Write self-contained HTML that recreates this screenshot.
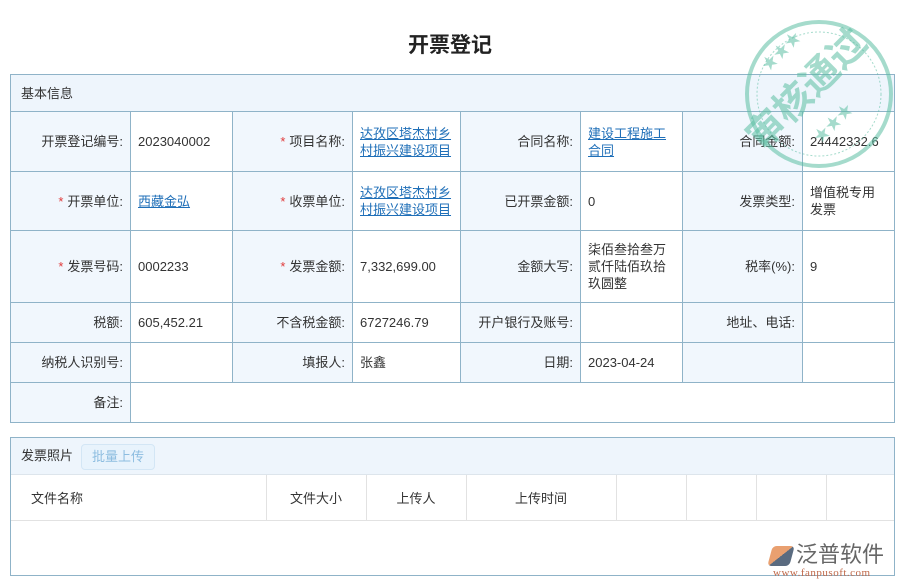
<!DOCTYPE html>
<html><head><meta charset="utf-8"><style>
*{margin:0;padding:0;box-sizing:border-box}
body{width:900px;height:588px;background:#fff;font-family:"Liberation Sans","Noto Sans CJK SC",sans-serif;font-size:13px;color:#333;position:relative;overflow:hidden}
h1{position:absolute;top:29px;left:0;width:900px;text-align:center;font-size:21px;font-weight:bold;color:#222}
table{border-collapse:collapse;table-layout:fixed;position:absolute;left:10px}
#t1{top:74px;width:884px}
#t1 td{border:1px solid #8fb3c8;padding:0 7px;line-height:17px;vertical-align:middle}
td.l{background:#f1f7fd;text-align:right}
td.h{background:#eef5fc;padding-left:10px!important}
.r{color:#e03a3a;margin-right:4px}
a{color:#1f6fb8;text-decoration:underline}
#b2{position:absolute;left:10px;top:437px;width:885px;height:139px;border:1px solid #8fb3c8}
#b2 .hd{height:37px;background:#eef5fc;border-bottom:1px solid #dde5ec;padding-left:10px;line-height:36px}
.btn{display:inline-block;margin-left:8px;padding:0 10px;height:26px;line-height:24px;border:1px solid #d3e6f5;border-radius:4px;background:#e8f3fc;color:#8dbde0;vertical-align:middle}
#t2{position:static;width:883px}
#t2 td{border-right:1px solid #e2e2e2;border-bottom:1px solid #e2e2e2;height:45px}
</style></head><body>
<h1>开票登记</h1>
<table id="t1">
<colgroup><col style="width:120px"><col style="width:102px"><col style="width:120px"><col style="width:108px"><col style="width:120px"><col style="width:102px"><col style="width:120px"><col style="width:92px"></colgroup>
<tr style="height:37px"><td class="h" colspan="8" style="text-align:left">基本信息</td></tr>
<tr style="height:60px"><td class="l">开票登记编号:</td><td>2023040002</td><td class="l"><span class="r">*</span>项目名称:</td><td><a>达孜区塔杰村乡村振兴建设项目</a></td><td class="l">合同名称:</td><td><a>建设工程施工合同</a></td><td class="l">合同金额:</td><td>24442332.6</td></tr>
<tr style="height:59px"><td class="l"><span class="r">*</span>开票单位:</td><td><a>西藏金弘</a></td><td class="l"><span class="r">*</span>收票单位:</td><td><a>达孜区塔杰村乡村振兴建设项目</a></td><td class="l">已开票金额:</td><td>0</td><td class="l">发票类型:</td><td>增值税专用发票</td></tr>
<tr style="height:72px"><td class="l"><span class="r">*</span>发票号码:</td><td>0002233</td><td class="l"><span class="r">*</span>发票金额:</td><td>7,332,699.00</td><td class="l">金额大写:</td><td>柒佰叁拾叁万贰仟陆佰玖拾玖圆整</td><td class="l">税率(%):</td><td>9</td></tr>
<tr style="height:40px"><td class="l">税额:</td><td>605,452.21</td><td class="l">不含税金额:</td><td>6727246.79</td><td class="l">开户银行及账号:</td><td></td><td class="l">地址、电话:</td><td></td></tr>
<tr style="height:40px"><td class="l">纳税人识别号:</td><td></td><td class="l">填报人:</td><td>张鑫</td><td class="l">日期:</td><td>2023-04-24</td><td class="l"></td><td></td></tr>
<tr style="height:40px"><td class="l">备注:</td><td colspan="7"></td></tr>
</table>
<div id="b2"><div class="hd">发票照片<span class="btn">批量上传</span></div>
<table id="t2"><colgroup><col style="width:255px"><col style="width:100px"><col style="width:100px"><col style="width:150px"><col style="width:70px"><col style="width:70px"><col style="width:70px"><col></colgroup>
<tr><td style="padding-left:20px">文件名称</td><td style="text-align:center">文件大小</td><td style="text-align:center">上传人</td><td style="text-align:center">上传时间</td><td></td><td></td><td></td><td style="border-right:none"></td></tr></table>
</div>
<svg style="position:absolute;left:740px;top:14px" width="160" height="160" viewBox="0 0 160 160">
<g opacity="0.55" fill="none" stroke="#5cbfa3">
<circle cx="79" cy="80" r="72" stroke-width="4"/><circle cx="79" cy="80" r="62" stroke-width="1" stroke-dasharray="2 2"/>
</g>
<g opacity="0.55" fill="#5cbfa3"><text x="0" y="0" font-size="38" font-weight="bold" font-family="Noto Sans CJK SC,sans-serif" transform="translate(22,138) rotate(-45)">审核通过</text>
<text x="0" y="0" font-size="16" transform="translate(28,58) rotate(-45)">★★★</text><text x="0" y="0" font-size="16" transform="translate(80,130) rotate(-45)">★★★</text></g>
</svg>
<div style="position:absolute;left:770px;top:540px;color:#666;font-size:22px;font-family:'Noto Sans CJK SC',sans-serif;line-height:26px"><span style="display:inline-block;width:22px;height:20px;background:linear-gradient(135deg,#e9a070 50%,#5a6b80 50%);border-radius:4px;transform:skewX(-15deg);vertical-align:middle;margin-right:4px"></span>泛普软件</div>
<div style="position:absolute;left:773px;top:567px;color:#c0694a;font-size:11px;font-family:'Liberation Serif',serif;letter-spacing:0.5px">www.fanpusoft.com</div>
</body></html>
